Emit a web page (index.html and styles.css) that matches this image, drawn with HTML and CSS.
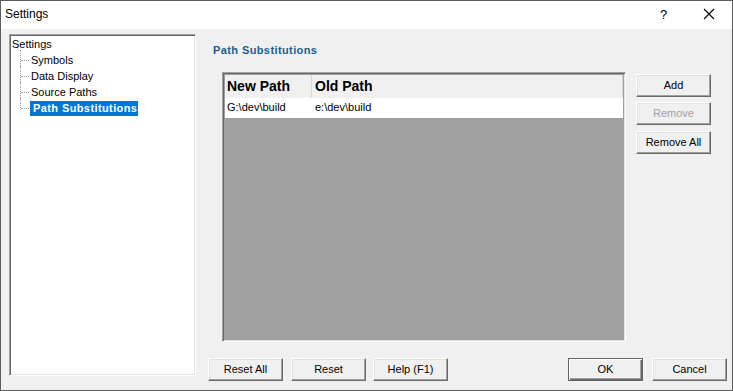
FILE: index.html
```html
<!DOCTYPE html>
<html>
<head>
<meta charset="utf-8">
<link rel="stylesheet" href="styles.css">
</head>
<body>
<div class="window">
  <div class="titlebar">
    <span class="title">Settings</span>
    <span class="help">?</span>
    <span class="close"><svg width="12" height="12" viewBox="0 0 12 12"><path d="M1 1L11 11M11 1L1 11" stroke="#000" stroke-width="1.1" fill="none"/></svg></span>
  </div>
  <div class="body">
    <div class="tree sunken">
      <div class="root">Settings</div>
      <ul class="children">
        <li><span class="label">Symbols</span></li>
        <li><span class="label">Data Display</span></li>
        <li><span class="label">Source Paths</span></li>
        <li class="last"><span class="label sel">Path Substitutions</span></li>
      </ul>
    </div>
    <div class="main">
      <div class="heading">Path Substitutions</div>
      <div class="content">
        <div class="list sunken">
          <div class="lhead">
            <div class="c1 hcol">New Path</div>
            <div class="c2 hcol">Old Path</div>
          </div>
          <div class="lrow">
            <div class="c1">G:\dev\build</div>
            <div class="c2">e:\dev\build</div>
          </div>
          <div class="lempty"></div>
        </div>
        <div class="side">
          <button class="btn">Add</button>
          <button class="btn disabled">Remove</button>
          <button class="btn">Remove All</button>
        </div>
      </div>
      <div class="footer">
        <button class="btn">Reset All</button>
        <button class="btn">Reset</button>
        <button class="btn">Help (F1)</button>
        <button class="btn default ok">OK</button>
        <button class="btn">Cancel</button>
      </div>
    </div>
  </div>
</div>
</body>
</html>
```
FILE: styles.css
```css
* { box-sizing: border-box; }
html, body { margin: 0; padding: 0; }
body {
  width: 733px;
  height: 391px;
  overflow: hidden;
  font-family: "Liberation Sans", Arial, sans-serif;
  font-size: 11px;
  color: #000;
}
.window {
  width: 733px;
  height: 391px;
  border: 1px solid #5c5c5c;
  display: flex;
  flex-direction: column;
  background: #f0f0f0;
}
.titlebar {
  height: 28px;
  background: #fff;
  display: flex;
  align-items: center;
  padding-left: 4px;
  flex-shrink: 0;
}
.title {
  font-size: 12px;
  flex: 1;
  padding-bottom: 2px;
}
.help {
  font-size: 13px;
  width: 12px;
  margin-right: 31px;
  padding-bottom: 2px;
}
.close {
  display: flex;
  width: 12px;
  height: 12px;
  margin-right: 17px;
  margin-bottom: 2px;
}
.body {
  flex: 1;
  display: flex;
  align-items: flex-start;
  padding: 5px 5px 0 8px;
}
.sunken {
  border-top: 1px solid #a0a0a0;
  border-left: 1px solid #a0a0a0;
  border-right: 1px solid #fff;
  border-bottom: 1px solid #fff;
  box-shadow: inset 1px 1px 0 #696969, inset -1px -1px 0 #e3e3e3;
}
.tree {
  width: 187px;
  height: 342px;
  background: #fff;
  padding: 1px 2px 2px 2px;
}
.root {
  height: 16px;
  line-height: 16px;
}
.children {
  list-style: none;
  margin: 0;
  padding: 0 0 0 18px;
}
.children li {
  position: relative;
  height: 16px;
  line-height: 16px;
}
.children li::before {
  content: "";
  position: absolute;
  left: -10px;
  top: -2px;
  height: 18px;
  border-left: 1px dotted #a0a0a0;
}
.children li.last::before {
  height: 10px;
}
.children li::after {
  content: "";
  position: absolute;
  left: -9px;
  top: 8px;
  width: 8px;
  border-top: 1px dotted #a0a0a0;
}
.label {
  display: inline-block;
  padding: 0 1px 0 1px;
}
.sel {
  background: #0078d7;
  color: #fff;
  font-weight: bold;
  letter-spacing: 0.4px;
  padding: 0 1px 0 3px;
  height: 15px;
  line-height: 15px;
}
.main {
  flex: 1;
  margin-left: 12px;
  display: flex;
  flex-direction: column;
}
.heading {
  margin-top: 9px;
  padding-left: 5px;
  height: 14px;
  line-height: 14px;
  font-weight: bold;
  letter-spacing: 0.4px;
  color: #1b5e8e;
}
.content {
  margin-top: 15px;
  display: flex;
  height: 270px;
}
.list {
  margin-left: 14px;
  width: 404px;
  height: 270px;
  display: flex;
  flex-direction: column;
  padding: 2px;
  background: #a0a0a0;
}
.lhead {
  display: flex;
  height: 23px;
  background: #f0f0f0;
  font-size: 14px;
  font-weight: bold;
}
.hcol {
  line-height: 22px;
  border-right: 1px solid #d5d5d5;
  height: 22px;
}
.c1 { width: 87px; padding-left: 2px; }
.c2 { width: 311px; padding-left: 3px; }
.lrow {
  display: flex;
  height: 20px;
  line-height: 19px;
  background: #fff;
  white-space: nowrap;
}
.lempty {
  flex: 1;
  background: #a0a0a0;
}
.side {
  margin-left: 10px;
  padding-top: 2px;
  display: flex;
  flex-direction: column;
  gap: 5px;
}
.btn {
  width: 75px;
  height: 23px;
  font-family: "Liberation Sans", Arial, sans-serif;
  font-size: 11px;
  color: #000;
  background: #f0f0f0;
  border-top: 1px solid #fff;
  border-left: 1px solid #fff;
  border-right: 1px solid #696969;
  border-bottom: 1px solid #696969;
  box-shadow: inset -1px -1px 0 #a0a0a0, inset 1px 1px 0 #e3e3e3;
  padding: 0 0 1px 0;
  margin: 0;
}
.side .btn:last-child { margin-top: 1px; }
.btn.disabled { color: #a0a0a0; }
.btn.default {
  border: 1px solid #646464;
  box-shadow: inset 1px 1px 0 #fff, inset -1px -1px 0 #696969, inset -2px -2px 0 #a0a0a0;
}
.footer {
  margin-top: 16px;
  display: flex;
  gap: 8px;
}
.footer .btn:nth-child(3) { margin-left: -1px; }
.footer .ok { margin-left: auto; margin-right: 1px; }
```
